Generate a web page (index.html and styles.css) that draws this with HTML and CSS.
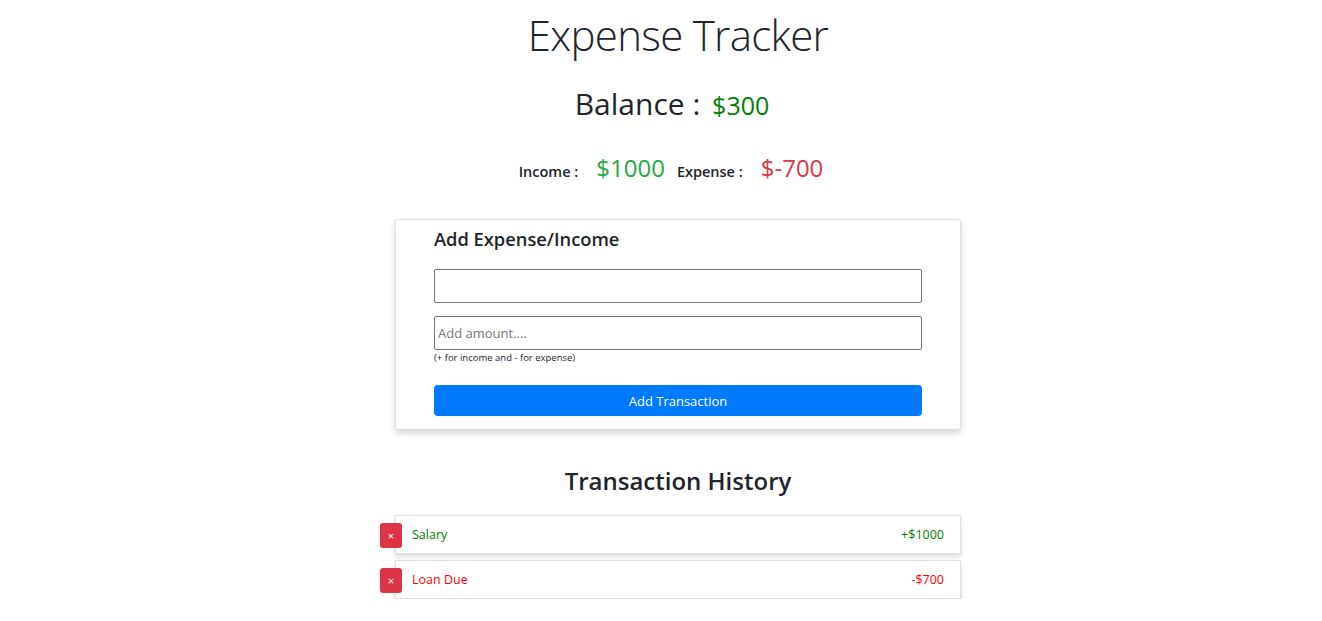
FILE: index.html
```html
<!DOCTYPE html>
<html>
<head>
<meta charset="utf-8">
<link rel="stylesheet" href="styles.css">
</head>
<body>
<div class="app">
  <h1 class="title">Expense Tracker</h1>
  <h2 class="balance">Balance : <span class="balance-value">$300</span></h2>
  <div class="totals">
    <span class="total-label">Income :</span>
    <span class="income-value">$1000</span>
    <span class="total-label">Expense :</span>
    <span class="expense-value">$-700</span>
  </div>
  <div class="card">
    <h3 class="card-title">Add Expense/Income</h3>
    <input class="field" type="text">
    <input class="field field-amount" type="text" placeholder="Add amount....">
    <div class="hint">(+ for income and - for expense)</div>
    <button class="btn">Add Transaction</button>
  </div>
  <h2 class="history-title">Transaction History</h2>
  <ul class="list">
    <li class="item">
      <button class="del">×</button>
      <span class="name plus">Salary</span>
      <span class="amt plus">+$1000</span>
    </li>
    <li class="item">
      <button class="del">×</button>
      <span class="name minus">Loan Due</span>
      <span class="amt minus">-$700</span>
    </li>
  </ul>
</div>
</body>
</html>
```
FILE: styles.css
```css
* { box-sizing: border-box; }
html, body { margin: 0; padding: 0; background: #fff; }
body {
  font-family: "Open Sans", "Noto Sans", sans-serif;
  color: #212529;
  padding-left: 34px;
}
.app {
  width: 566px;
  margin: 0 auto;
  display: flex;
  flex-direction: column;
  align-items: stretch;
}
.title {
  margin: 5px 0 0;
  font-size: 42px;
  font-weight: 300;
  line-height: 60px;
  text-align: center;
  letter-spacing: -0.7px;
}
.balance {
  margin: 19px 0 0;
  font-size: 30px;
  font-weight: 400;
  line-height: 40px;
  text-align: center;
  margin-right: 12px;
}
.balance-value {
  color: #008000;
  font-size: 25px;
  font-weight: 500;
  margin-left: 4px;
}
.totals {
  margin-top: 26px;
  display: flex;
  justify-content: center;
  align-items: baseline;
  gap: 12px;
  margin-right: 14px;
}
.total-label { font-size: 14.5px; font-weight: 600; }
.income-value { color: #28a745; font-size: 24px; font-weight: 500; margin-left: 6px; }
.expense-value { color: #dc3545; font-size: 24px; font-weight: 500; margin-left: 6px; }
.card {
  margin-top: 35px;
  border: 1px solid #dfdfdf;
  border-radius: 3px;
  box-shadow: 0 3px 6px rgba(0,0,0,0.16);
  padding: 6px 38px 13px 38px;
  display: flex;
  flex-direction: column;
}
.card-title {
  margin: 0;
  font-size: 18.3px;
  font-weight: 600;
  line-height: 26px;
}
.field {
  margin-top: 17px;
  height: 34px;
  border: 1px solid #767676;
  border-radius: 2px;
  padding: 0 3px;
  font-family: inherit;
  font-size: 13px;
}
.field-amount { margin-top: 13px; }
.field::placeholder { color: #757575; }
.hint {
  font-size: 9.5px;
  line-height: 14px;
  margin-top: 1px;
  color: #212529;
}
.btn {
  margin-top: 20px;
  height: 31px;
  border: none;
  border-radius: 4px;
  background: #007bff;
  color: #fff;
  font-family: inherit;
  font-size: 13px;
}
.history-title {
  margin: 34px 0 0;
  font-size: 24px;
  font-weight: 600;
  line-height: 34px;
  text-align: center;
}
.list {
  list-style: none;
  margin: 17px 0 0;
  padding: 0;
  display: flex;
  flex-direction: column;
  gap: 6px;
}
.item {
  position: relative;
  height: 39px;
  border: 1px solid #e0e0e0;
  box-shadow: 0 3px 5px rgba(0,0,0,0.14);
  display: flex;
  align-items: center;
  justify-content: space-between;
  padding: 0 16px 0 16px;
  font-size: 12.5px;
}
.del {
  position: absolute;
  left: -16px;
  top: 7px;
  width: 22px;
  height: 25px;
  border: none;
  border-radius: 3px;
  background: #dc3545;
  color: #fff;
  font-size: 11px;
  padding: 0;
  font-family: inherit;
}
.plus { color: #008000; }
.minus { color: #ff0000; }
```
